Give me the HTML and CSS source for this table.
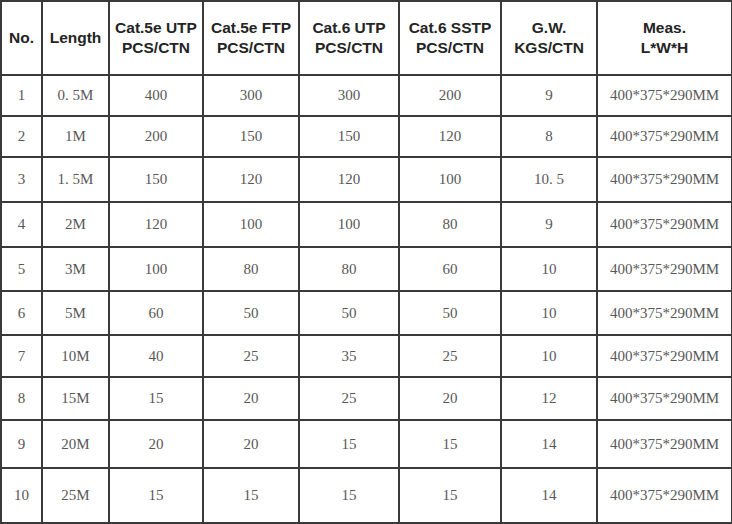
FILE: index.html
```html
<!DOCTYPE html>
<html>
<head>
<meta charset="utf-8">
<link rel="stylesheet" href="styles.css">
</head>
<body>
<table class="spec">
<colgroup>
<col class="c-no"><col class="c-len"><col class="c-a"><col class="c-b"><col class="c-c"><col class="c-d"><col class="c-gw"><col class="c-meas">
</colgroup>
<thead>
<tr>
<th>No.</th><th>Length</th><th>Cat.5e UTP<br>PCS/CTN</th><th>Cat.5e FTP<br>PCS/CTN</th><th>Cat.6 UTP<br>PCS/CTN</th><th>Cat.6 SSTP<br>PCS/CTN</th><th>G.W.<br>KGS/CTN</th><th>Meas.<br>L*W*H</th>
</tr>
</thead>
<tbody>
<tr><td>1</td><td>0. 5M</td><td>400</td><td>300</td><td>300</td><td>200</td><td>9</td><td>400*375*290MM</td></tr>
<tr><td>2</td><td>1M</td><td>200</td><td>150</td><td>150</td><td>120</td><td>8</td><td>400*375*290MM</td></tr>
<tr><td>3</td><td>1. 5M</td><td>150</td><td>120</td><td>120</td><td>100</td><td>10. 5</td><td>400*375*290MM</td></tr>
<tr><td>4</td><td>2M</td><td>120</td><td>100</td><td>100</td><td>80</td><td>9</td><td>400*375*290MM</td></tr>
<tr><td>5</td><td>3M</td><td>100</td><td>80</td><td>80</td><td>60</td><td>10</td><td>400*375*290MM</td></tr>
<tr><td>6</td><td>5M</td><td>60</td><td>50</td><td>50</td><td>50</td><td>10</td><td>400*375*290MM</td></tr>
<tr><td>7</td><td>10M</td><td>40</td><td>25</td><td>35</td><td>25</td><td>10</td><td>400*375*290MM</td></tr>
<tr><td>8</td><td>15M</td><td>15</td><td>20</td><td>25</td><td>20</td><td>12</td><td>400*375*290MM</td></tr>
<tr><td>9</td><td>20M</td><td>20</td><td>20</td><td>15</td><td>15</td><td>14</td><td>400*375*290MM</td></tr>
<tr><td>10</td><td>25M</td><td>15</td><td>15</td><td>15</td><td>15</td><td>14</td><td>400*375*290MM</td></tr>
</tbody>
</table>
</body>
</html>
```

FILE: styles.css
```css
html, body {
  margin: 0;
  padding: 0;
  background: #fff;
}

.spec {
  border-collapse: collapse;
  table-layout: fixed;
  width: 731px;
  margin: 0;
}

.spec th,
.spec td {
  border: 2px solid #3a3a3a;
  text-align: center;
  vertical-align: middle;
  padding: 0;
}

.spec th {
  font-family: "Liberation Sans", Arial, sans-serif;
  font-weight: bold;
  font-size: 15.5px;
  line-height: 20px;
  color: #242424;
  height: 72px;
}

.spec td {
  font-family: "Liberation Serif", "Times New Roman", serif;
  font-size: 15px;
  color: #585858;
}

.c-no { width: 41px; }
.c-len { width: 67px; }
.c-a { width: 94px; }
.c-b { width: 96px; }
.c-c { width: 100px; }
.c-d { width: 102px; }
.c-gw { width: 96px; }
.c-meas { width: 135px; }

.spec tbody tr:nth-child(1) { height: 41px; }
.spec tbody tr:nth-child(2) { height: 41px; }
.spec tbody tr:nth-child(3) { height: 45px; }
.spec tbody tr:nth-child(4) { height: 45px; }
.spec tbody tr:nth-child(5) { height: 44px; }
.spec tbody tr:nth-child(6) { height: 44px; }
.spec tbody tr:nth-child(7) { height: 42px; }
.spec tbody tr:nth-child(8) { height: 43px; }
.spec tbody tr:nth-child(9) { height: 48px; }
.spec tbody tr:nth-child(10) { height: 55px; }
```
